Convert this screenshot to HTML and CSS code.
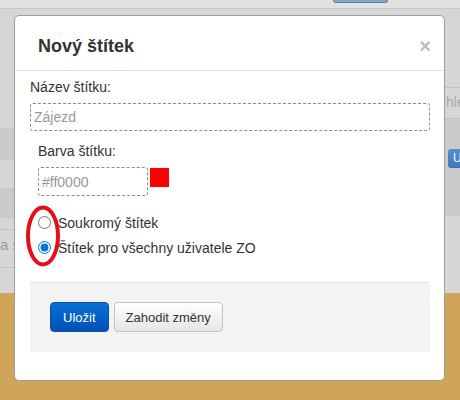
FILE: index.html
```html
<!DOCTYPE html>
<html lang="cs">
<head>
    <meta charset="UTF-8">
    <meta name="viewport" content="width=device-width, initial-scale=1.0">
    <title>Nový štítek</title>
    <link rel="stylesheet" href="styles.css">
</head>
<body>

    <div class="page">
        <div class="topbar"><span class="top-btn"></span></div>
        <div class="rows">
            <div class="side">
                <div class="row light h119"></div>
                <div class="row dark h32"></div>
                <div class="row light h28"></div>
                <div class="row dark h30"></div>
                <div class="row light h12 line"></div>
                <div class="row light h38 line"><span class="ghost-text">a s</span></div>
                <div class="row light fill"></div>
            </div>
            <div class="side side-right">
                <div class="row light h79 line"></div>
                <div class="row light h30 line"><span class="ghost-box">hlé</span></div>
                <div class="row dark h97"><span class="ghost-btn">U</span></div>
                <div class="row light fill"></div>
            </div>
        </div>
    </div>

    <div class="modal">
        <div class="modal-header">
            <h3>Nový štítek</h3>
            <span class="close">×</span>
        </div>

        <form class="modal-body" id="stitekForm">
            <label for="nazev">Název štítku:</label>
            <input type="text" id="nazev" class="field" placeholder="Zájezd">

            <label for="barva" class="indent">Barva štítku:</label>
            <div class="color-row indent">
                <input type="text" id="barva" class="field color-field" placeholder="#ff0000">
                <span class="swatch"></span>
            </div>

            <div class="radios">
                <label class="radio"><input type="radio" name="typ">Soukromý štítek</label>
                <label class="radio"><input type="radio" name="typ" checked>Štítek pro všechny uživatele ZO</label>
            </div>

            <div class="modal-footer">
                <button type="submit" class="btn btn-primary">Uložit</button>
                <button type="button" class="btn">Zahodit změny</button>
            </div>
        </form>
    </div>

    <svg class="mark" width="40" height="68" viewBox="0 0 40 68">
        <ellipse cx="19" cy="33" rx="15" ry="28.5" fill="none" stroke="#e3101b" stroke-width="4"/>
    </svg>

</body>
</html>
```

FILE: styles.css
```css
body {
    margin: 0;
    font-family: "Liberation Sans", Arial, sans-serif;
    background-color: #cfa55a;
    color: #333;
}

.page {
    height: 293px;
    background-color: #d6d6d6;
    display: flex;
    flex-direction: column;
}

.topbar {
    height: 8px;
    background-color: #e2e2e2;
    border-bottom: 1px solid #c6c6c6;
    display: flex;
}

.top-btn {
    margin-left: 333px;
    width: 53px;
    height: 2px;
    background-color: #7fa6c6;
    border: 1px solid #5c87ad;
    border-top: none;
    border-radius: 0 0 3px 3px;
}

.rows {
    flex: 1;
    display: flex;
    justify-content: space-between;
}

.side {
    width: 30px;
    display: flex;
    flex-direction: column;
}

.side-right {
    width: 20px;
}

.row {
    position: relative;
    overflow: hidden;
}

.light { background-color: #d6d6d6; }
.dark { background-color: #cacaca; }
.line { border-bottom: 1px solid #c2c2c2; }
.fill { flex: 1; }

.h119 { height: 119px; }
.h32 { height: 32px; }
.h28 { height: 28px; }
.h30 { height: 30px; }
.h12 { height: 11px; }
.h38 { height: 37px; }
.h79 { height: 78px; }
.h97 { height: 97px; }

.ghost-text {
    display: block;
    padding-top: 5px;
    font-size: 15px;
    line-height: 20px;
    color: #9a9a9a;
}

.ghost-box {
    display: block;
    margin: 0 0 0 6px;
    height: 28px;
    font-size: 14px;
    line-height: 28px;
    color: #ababab;
    white-space: nowrap;
}

.ghost-btn {
    display: block;
    margin: 30px 0 0 8px;
    height: 19px;
    background: linear-gradient(#5a8fcf, #3f74b7);
    border-radius: 3px 0 0 3px;
    color: #fff;
    font-size: 12px;
    line-height: 19px;
    padding-left: 5px;
}

.modal {
    position: absolute;
    top: 15px;
    left: 14px;
    width: 431px;
    box-sizing: border-box;
    background-color: white;
    border: 1px solid #9d9d9d;
    border-radius: 5px;
}

.modal-header {
    margin: 0 1px 0 2px;
    padding: 20px 12px 14px 21px;
    border-bottom: 1px solid #dcdcdc;
    display: flex;
    justify-content: space-between;
    align-items: center;
}

.modal-header h3 {
    margin: 0;
    font-size: 18px;
    line-height: 20px;
    font-weight: bold;
    color: #333;
}

.close {
    font-size: 20px;
    line-height: 20px;
    font-weight: bold;
    color: #bdbdbd;
}

.modal-body {
    padding: 0 14px 0 15px;
    margin-bottom: 28px;
}

.modal-body > label {
    display: block;
    font-size: 14px;
    line-height: 20px;
    margin-top: 6px;
}

.modal-body > label.indent {
    margin-top: 10px;
}

.indent {
    margin-left: 8px;
}

.field {
    display: block;
    box-sizing: border-box;
    width: 100%;
    height: 28px;
    margin-top: 6px;
    padding: 0 3px;
    border: 1px dashed #8c8c8c;
    border-radius: 3px;
    font-family: inherit;
    font-size: 14px;
    color: #333;
}

.field::placeholder {
    color: #999;
}

.color-row {
    display: flex;
    align-items: flex-start;
    gap: 2px;
    margin-top: 6px;
}

.color-field {
    width: 110px;
    height: 29px;
    margin-top: 0;
}

.swatch {
    width: 19px;
    height: 19px;
    margin-top: 1px;
    background-color: #ff0000;
}

.radios {
    margin-top: 14px;
    padding-left: 8px;
}

.radio {
    display: flex;
    align-items: center;
    height: 25px;
    font-size: 14px;
    color: #333;
}

.radio input {
    width: 13px;
    height: 13px;
    margin: 0 7px 0 0;
    accent-color: #0075db;
}

.modal-footer {
    margin-top: 22px;
    padding: 19px 20px 20px;
    background-color: #f3f3f3;
    border-top: 1px solid #e3e3e3;
    display: flex;
    gap: 5px;
}

.btn {
    height: 30px;
    padding: 0 11px;
    border: 1px solid #c4c4c4;
    border-radius: 4px;
    background: linear-gradient(#ffffff, #e6e6e6);
    font-family: inherit;
    font-size: 13px;
    color: #333;
    cursor: pointer;
}

.btn-primary {
    padding: 0 12px;
    border-color: #0650a8;
    background: linear-gradient(#0a70d6, #0150b3);
    color: white;
}

.mark {
    position: absolute;
    left: 24px;
    top: 203px;
}
```
